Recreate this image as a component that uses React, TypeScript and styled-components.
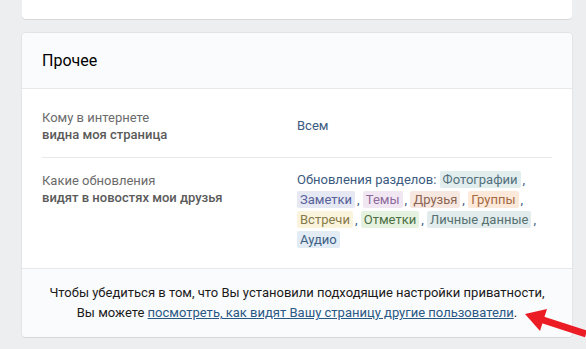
import React from 'react';
import styled, { createGlobalStyle } from 'styled-components';

const GlobalStyle = createGlobalStyle`
  html, body {
    margin: 0;
    padding: 0;
    background: #edeef0;
  }
  body {
    font-family: Roboto, "Open Sans", "Liberation Sans", sans-serif;
    font-size: 13px;
    -webkit-font-smoothing: antialiased;
  }
`;

const Page = styled.div`
  position: relative;
  width: 586px;
  height: 349px;
  padding-left: 22px;
  box-sizing: border-box;
  overflow: hidden;
`;

const TopCard = styled.div`
  width: 550px;
  height: 19px;
  background: #fff;
  border-radius: 0 0 4px 4px;
  box-shadow: 0 1px 0 0 #d7d8db;
`;

const Card = styled.div`
  width: 550px;
  margin-top: 14px;
  background: #fff;
  border-radius: 4px;
  box-shadow: 0 1px 0 0 #d7d8db, 0 0 0 1px #e3e4e8;
  overflow: hidden;
`;

const Header = styled.div`
  height: 55px;
  line-height: 55px;
  padding-left: 20px;
  background: #fafbfc;
  border-bottom: 1px solid #e7e8ec;
  font-size: 16px;
  color: #000;
`;

const Body = styled.div`
  padding: 6px 20px 4px;
`;

const Row = styled.div<{ $center?: boolean }>`
  display: flex;
  align-items: ${p => (p.$center ? 'center' : 'flex-start')};
  padding: 14px 0;
  & + & {
    border-top: 1px solid #e7e8ec;
  }
`;

const Label = styled.div`
  width: 255px;
  flex-shrink: 0;
  line-height: 17px;
  color: #6b6b6b;
`;

const Strong = styled.span`
  font-weight: 500;
  color: #5a5a5a;
`;

const Value = styled.div<{ $pull?: boolean }>`
  flex: 1;
  line-height: 20px;
  color: #3b5a80;
  margin-top: ${p => (p.$pull ? '-2px' : '0')};
`;

const Item = styled.span`
  white-space: nowrap;
`;

const Chip = styled.span<{ $bg: string; $fg: string }>`
  background: ${p => p.$bg};
  color: ${p => p.$fg};
  padding: 1px 3px;
  border-radius: 2px;
`;

const Comma = styled.span`
  margin-left: 2px;
  color: #3b5a80;
`;

const Footer = styled.div`
  background: #fafbfc;
  border-top: 1px solid #e7e8ec;
  padding: 14px 20px;
  text-align: center;
  line-height: 20px;
  color: #1a1a1a;
`;

const Link = styled.a`
  color: #2a5885;
  text-decoration: underline;
  cursor: pointer;
`;

const Arrow = styled.svg`
  position: absolute;
  left: 520px;
  top: 298px;
`;

const chips = [
  { t: 'Фотографии', bg: '#e2eded', fg: '#52717e' },
  { t: 'Заметки', bg: '#e6e8f3', fg: '#56619a' },
  { t: 'Темы', bg: '#f1e7f3', fg: '#8e6a9b' },
  { t: 'Друзья', bg: '#f6e8e1', fg: '#8c6350' },
  { t: 'Группы', bg: '#fce9da', fg: '#a3693f' },
  { t: 'Встречи', bg: '#fbf4dd', fg: '#867a4b' },
  { t: 'Отметки', bg: '#e6f2e0', fg: '#4b6f43' },
  { t: 'Личные данные', bg: '#e2ecec', fg: '#567172' },
  { t: 'Аудио', bg: '#e3ebf4', fg: '#3b5f86' },
];

export default function App() {
  return (
    <>
      <GlobalStyle />
      <Page>
        <TopCard />
        <Card>
          <Header>Прочее</Header>
          <Body>
            <Row $center>
              <Label>
                Кому в интернете
                <br />
                <Strong>видна моя страница</Strong>
              </Label>
              <Value>Всем</Value>
            </Row>
            <Row>
              <Label>
                Какие обновления
                <br />
                <Strong>видят в новостях мои друзья</Strong>
              </Label>
              <Value $pull>
                Обновления разделов:{' '}
                {chips.map((c, i) => (
                  <React.Fragment key={c.t}>
                    <Item>
                      <Chip $bg={c.bg} $fg={c.fg}>{c.t}</Chip>
                      {i < chips.length - 1 && <Comma>,</Comma>}
                    </Item>{' '}
                  </React.Fragment>
                ))}
              </Value>
            </Row>
          </Body>
          <Footer>
            Чтобы убедиться в том, что Вы установили подходящие настройки приватности,
            <br />
            Вы можете <Link>посмотреть, как видят Вашу страницу другие пользователи</Link>.
          </Footer>
        </Card>
        <Arrow width="66" height="42" viewBox="0 0 66 42">
          <line x1="20" y1="21" x2="66" y2="36" stroke="#ec1c24" strokeWidth="7" />
          <polygon points="5,16 27,11 20,33" fill="#ec1c24" />
        </Arrow>
      </Page>
    </>
  );
}
